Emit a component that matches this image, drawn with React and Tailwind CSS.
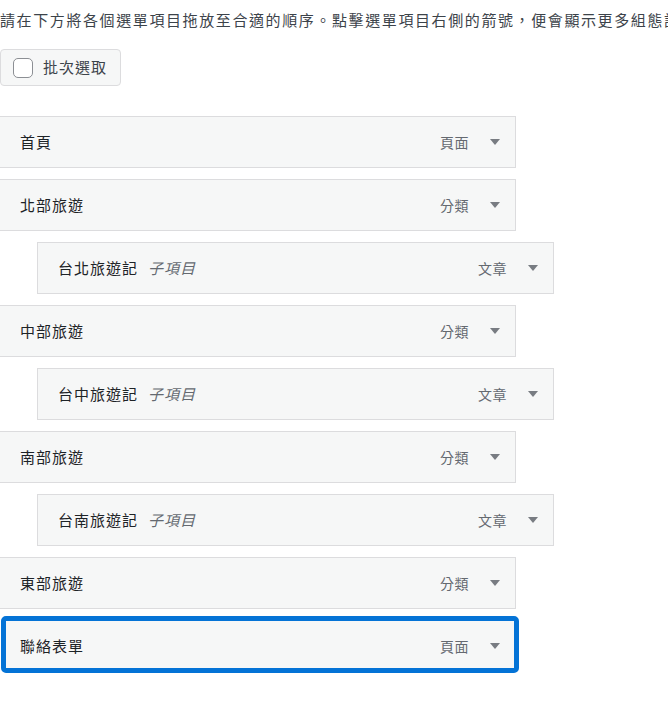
import React from "react";

const items = [
  { title: "首頁", type: "頁面", depth: 0 },
  { title: "北部旅遊", type: "分類", depth: 0 },
  { title: "台北旅遊記", type: "文章", depth: 1 },
  { title: "中部旅遊", type: "分類", depth: 0 },
  { title: "台中旅遊記", type: "文章", depth: 1 },
  { title: "南部旅遊", type: "分類", depth: 0 },
  { title: "台南旅遊記", type: "文章", depth: 1 },
  { title: "東部旅遊", type: "分類", depth: 0 },
  { title: "聯絡表單", type: "頁面", depth: 0, focused: true },
];

function Arrow() {
  return (
    <svg width="10" height="6" viewBox="0 0 10 6" className="shrink-0">
      <polygon points="0,0 10,0 5,6" fill="#787c82" />
    </svg>
  );
}

function MenuItem({ item }) {
  let box =
    "flex items-center justify-between w-[517px] h-[52px] border border-[#dcdcde] bg-[#f6f7f7] pl-5 pr-[15px]";
  if (item.depth === 1) box += " ml-[37px]";
  else box += " -ml-px";
  if (item.focused)
    box =
      "flex items-center justify-between w-[518px] h-[57px] ml-px -mt-[4px] border-[5px] border-[#0473d6] rounded-[5px] bg-[#f6f7f7] pl-[14px] pr-[14px] pt-[3px]";

  return (
    <li className={box}>
      <div className="flex items-center">
        <span className="text-[15px] tracking-[1px] text-[#1d2327]">
          {item.title}
        </span>
        {item.depth === 1 && (
          <span className="ml-[10px] text-[15px] tracking-[1px] italic text-[#646970]">
            子項目
          </span>
        )}
      </div>
      <div className="flex items-center gap-[21px]">
        <span className="text-[14px] tracking-[0.5px] text-[#646970]">
          {item.type}
        </span>
        <Arrow />
      </div>
    </li>
  );
}

function App() {
  return (
    <div
      className="w-[668px] min-h-[701px] overflow-hidden bg-white"
      style={{ fontFamily: '"Noto Sans CJK TC", "Noto Sans", sans-serif' }}
    >
      <p className="mt-[10px] whitespace-nowrap text-[15px] leading-[20px] tracking-[1.6px] text-[#3c434a]">
        請在下方將各個選單項目拖放至合適的順序。點擊選單項目右側的箭號，便會顯示更多組態設定。
      </p>
      <button className="mt-[19px] flex items-center h-[37px] w-[121px] rounded-[4px] border border-[#dcdcde] bg-[#f6f7f7] pl-[12px]">
        <span className="h-[20px] w-[20px] rounded-[5px] border border-[#8c8f94] bg-white" />
        <span className="ml-[10px] text-[15px] tracking-[1px] text-[#3c434a]">
          批次選取
        </span>
      </button>
      <ul className="mt-[30px] flex flex-col gap-[11px]">
        {items.map((item) => (
          <MenuItem key={item.title} item={item} />
        ))}
      </ul>
    </div>
  );
}

export default App;
